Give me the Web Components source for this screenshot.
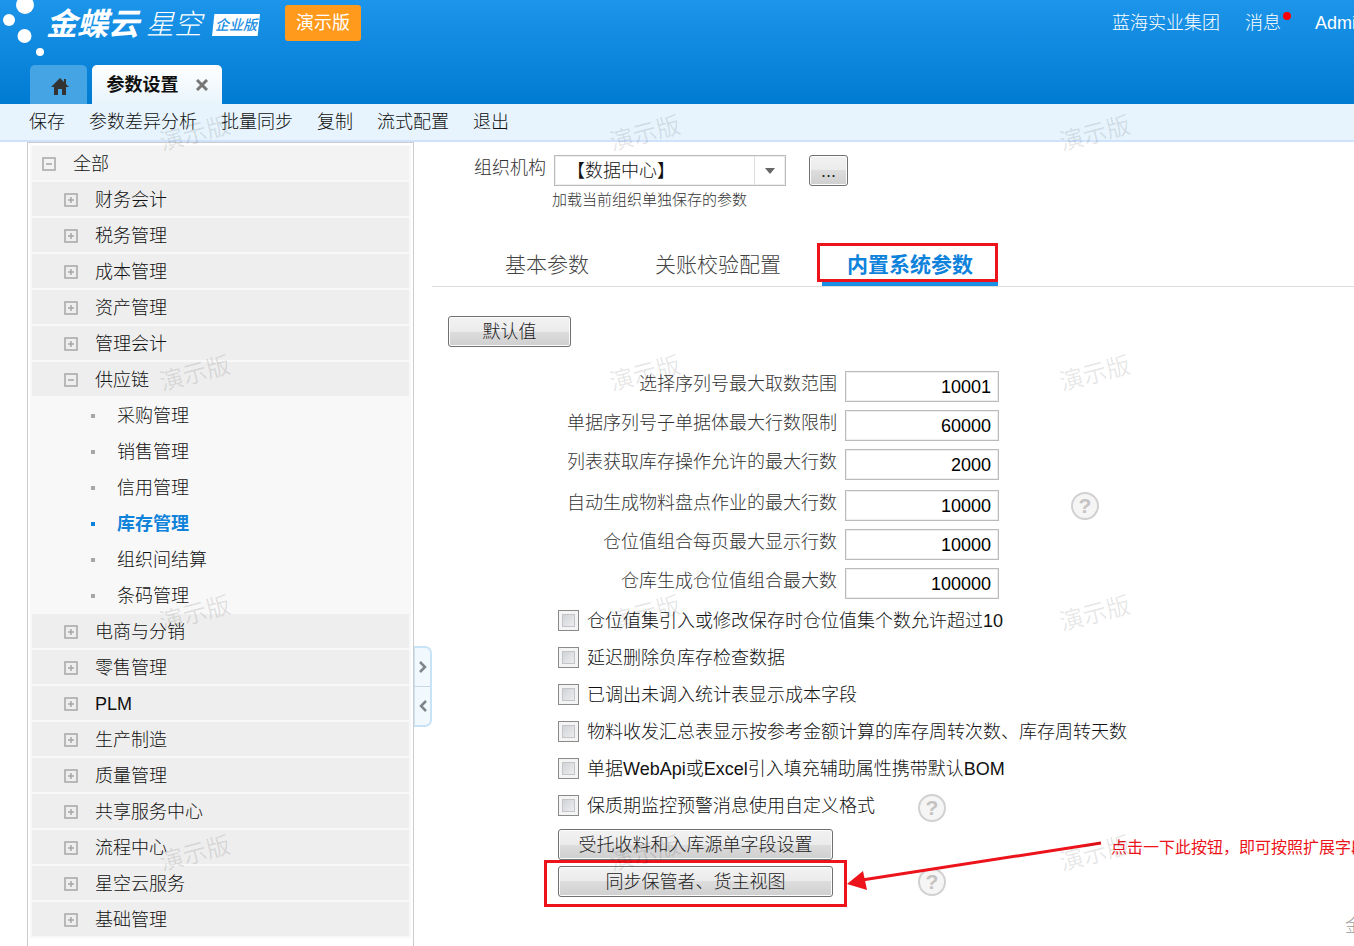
<!DOCTYPE html>
<html lang="zh-CN">
<head>
<meta charset="utf-8">
<title>参数设置</title>
<style>
    body{
        margin: 0;
        height: 100vh;
        overflow: hidden;
        background: #fff;
        color: #111;
        font: 300 18px/24px "Liberation Sans", "Noto Sans CJK SC", sans-serif;
    }
</style>
</head>
<body>
<param-app></param-app>

<script>
const define = (name, html, setup) => {
    const template = document.createElement('template');
    template.innerHTML = html;

    window.customElements.define(name, class extends HTMLElement{
        constructor() {
            super();
            this.attachShadow({ mode: 'open' });
            this.shadowRoot.appendChild(template.content.cloneNode(true));
        }

        connectedCallback() {
            if (setup) setup(this, this.shadowRoot);
        }
    });
};

// Brand, top right links and the page tabs

define('app-header', `
    <style>
        :host{
            display: flex;
            flex-direction: column;
            justify-content: space-between;
            height: 104px;
            flex: none;
            color: #fff;
            background: linear-gradient(#1c95ea, #007bd2);
        }
        .top{
            display: flex;
            align-items: flex-start;
            white-space: nowrap;
        }
        .dots{
            flex: none;
            width: 46px;
            height: 58px;
            fill: #fff;
        }
        .brand{
            display: flex;
            align-items: center;
            height: 50px;
            font-style: italic;
        }
        .name{
            font-size: 31px;
            font-weight: bold;
        }
        .sub{
            margin-left: 7px;
            font-size: 28px;
        }
        .edition{
            margin-left: 10px;
            padding: 0 3px;
            font-size: 14px;
            line-height: 22px;
            font-weight: 500;
            color: #1b8fe2;
            background: #fff;
            clip-path: polygon(5% 0, 100% 0, 95% 100%, 0 100%);
        }
        .demo{
            margin: 5px 0 0 25px;
            padding: 0 11px;
            line-height: 36px;
            border-radius: 3px;
            background: #ff9a1c;
            font-weight: 400;
        }
        nav{
            display: flex;
            gap: 25px;
            flex: 0 0 242px;
            min-width: 0;
            margin: 11px 0 0 auto;
        }
        a{
            color: inherit;
            text-decoration: none;
        }
        .msg{
            position: relative;
        }
        .msg::after{
            content: "";
            position: absolute;
            top: 1px;
            right: -10px;
            width: 8px;
            height: 8px;
            border-radius: 50%;
            background: #f00;
        }
        .msg + a{
            margin-left: 9px;
        }
        .tabs{
            display: flex;
            gap: 5px;
            padding-left: 30px;
        }
        .tab{
            display: flex;
            align-items: center;
            justify-content: center;
            height: 39px;
            border-radius: 5px 5px 0 0;
            font-weight: bold;
        }
        button{
            padding: 0;
            border: 0;
            background: none;
            font: inherit;
            color: inherit;
        }
        button.home{
            width: 57px;
            background: #45a4e4;
        }
        .home svg{
            margin: 3px 0 0 2px;
        }
        .open{
            gap: 17px;
            width: 130px;
            color: #111;
            background: linear-gradient(#fff, #e8f4fc);
        }
        .open svg{
            display: block;
        }
    </style>
    <div class="top">
        <svg class="dots" viewBox="0 0 46 58">
            <circle cx="25" cy="5" r="9"/><circle cx="9" cy="20" r="6"/>
            <circle cx="24.500" cy="36" r="7"/><circle cx="40" cy="52" r="4"/>
        </svg>
        <div class="brand">
            <span class="name">金蝶云</span><span class="sub">星空</span><span class="edition">企业版</span>
        </div>
        <span class="demo">演示版</span>
        <nav>
            <a href="#org">蓝海实业集团</a>
            <a class="msg" href="#message">消息</a>
            <a href="#user">Admin</a>
        </nav>
    </div>
    <div class="tabs">
        <button class="tab home" aria-label="首页">
            <svg width="18" height="17" viewBox="0 0 18 17"><path fill="#333" d="M9 0 0 9h3v8h4v-6h4v6h4V9h3l-3-3V1h-2v3z"/></svg>
        </button>
        <div class="tab open">
            <span>参数设置</span>
            <button aria-label="关闭"><svg width="12" height="12" viewBox="0 0 12 12"><path d="M1 1l10 10M11 1L1 11" stroke="#777" stroke-width="3"/></svg></button>
        </div>
    </div>
`);

define('tool-bar', `
    <style>
        :host{
            display: flex;
            flex: none;
            gap: 24px;
            height: 36px;
            padding-left: 29px;
            border-bottom: 2px solid #cfe2fd;
            background: #e7f4fd;
        }
        ::slotted(button){
            padding: 0;
            border: 0;
            background: none;
            font: inherit;
            color: inherit;
        }
    </style>
    <slot></slot>
`);

// One row of the module tree. kind: plus, minus or leaf

define('tree-item', `
    <style>
        :host{
            display: block;
            --indent: 32px;
            background: #eee;
        }
        :host([kind=leaf]){
            --indent: 54px;
            background: none;
        }
        :host([root]){
            --indent: 10px;
            background: #f3f3f3;
        }
        :host([current]){
            font-weight: bold;
            color: #0f83db;
        }
        a{
            display: flex;
            align-items: center;
            gap: 17px;
            box-sizing: border-box;
            height: 34px;
            padding: 1px 0 0 var(--indent);
            color: inherit;
            text-decoration: none;
        }
        svg{
            width: 14px;
            height: 14px;
            fill: none;
            stroke: #a6a6a6;
            stroke-width: 1.500;
        }
        .dot{
            fill: #a6a6a6;
            stroke: none;
        }
        :host([current]) .dot{
            fill: #0f83db;
        }
        :host([kind=leaf]) .box, :host(:not([kind=leaf])) .dot, :host(:not([kind=plus])) .bar{
            display: none;
        }
    </style>
    <a href="#module">
        <svg viewBox="0 0 14 14">
            <path class="box" d="M1 1h12v12H1zM4 7h6"/>
            <path class="bar" d="M7 4v6"/>
            <rect class="dot" x="5" y="5" width="4" height="4"/>
        </svg>
        <span><slot></slot></span>
    </a>
`);

define('module-tree', `
    <style>
        :host{
            display: block;
            flex: none;
            box-sizing: border-box;
            width: 387px;
            margin-left: 27px;
            padding: 2px;
            border: 1px solid #ccc;
            border-bottom: 0;
        }
        div{
            display: flex;
            flex-direction: column;
            gap: 2px;
            padding: 1px 2px 2px;
            background: #f8f8f8;
        }
    </style>
    <div><slot></slot></div>
`);

define('split-handle', `
    <style>
        :host{
            display: flex;
            flex-direction: column;
            flex: none;
            box-sizing: border-box;
            width: 18px;
            height: 81px;
            margin-top: 504px;
            border: 2px solid #c9e3f6;
            border-left-width: 1px;
            border-radius: 0 7px 7px 0;
            background: #f2f9fe;
        }
        button{
            flex: 1;
            padding: 0;
            border: 0;
            background: none;
        }
        button + button{
            border-top: 1px solid #c8d8e2;
        }
        svg{
            display: block;
            margin: auto;
            fill: none;
            stroke: #7d8589;
            stroke-width: 2.500;
        }
    </style>
    <button aria-label="展开"><svg width="8" height="12"><path d="M1 1l5 5-5 5"/></svg></button>
    <button aria-label="收起"><svg width="8" height="12"><path d="M7 1L2 6l5 5"/></svg></button>
`);

define('push-button', `
    <style>
        :host{
            display: block;
            flex: none;
            width: 123px;
        }
        :host([wide]){
            width: 275px;
        }
        :host([small]){
            width: 39px;
        }
        button{
            display: block;
            width: 100%;
            height: 31px;
            padding: 0;
            border: 1px solid #707070;
            border-radius: 3px;
            box-shadow: inset 0 0 0 1px #fcfcfc;
            background: linear-gradient(#f2f2f2, #ebebeb 50%, #ddd 50%, #cfcfcf);
            font: inherit;
            color: #222;
        }
    </style>
    <button><slot></slot></button>
`);

define('help-tip', `
    <style>
        :host{
            display: block;
            flex: none;
        }
        button{
            display: block;
            width: 28px;
            height: 28px;
            padding: 0;
            border: 2px solid #d2d0d0;
            border-radius: 50%;
            background: #f5f5f5;
            font: bold 21px/24px "Liberation Sans", sans-serif;
            color: #c5c2c2;
        }
    </style>
    <button aria-label="帮助">?</button>
`);

define('number-field', `
    <style>
        :host{
            display: flex;
            align-items: flex-start;
            gap: 8px;
            height: 31px;
        }
        label{
            width: 389px;
            line-height: 26px;
            text-align: right;
            color: #333;
        }
        input{
            box-sizing: border-box;
            width: 154px;
            height: 31px;
            padding: 1px 7px 0;
            border: 1px solid #bbb;
            box-shadow: inset 0 0 0 1px #eee;
            font: inherit;
            color: #000;
            text-align: right;
        }
        ::slotted(help-tip){
            margin: 2px 0 0 64px;
        }
    </style>
    <label for="num"></label>
    <input id="num" type="text" inputmode="numeric">
    <slot></slot>
`, (host, root) => {
    root.querySelector('label').textContent = host.getAttribute('label');
    root.querySelector('input').value = host.getAttribute('value');
});

define('check-field', `
    <style>
        :host{
            display: flex;
            align-items: center;
            height: 37px;
            white-space: nowrap;
        }
        label{
            display: flex;
            align-items: center;
            gap: 8px;
        }
        input{
            appearance: none;
            width: 21px;
            height: 21px;
            margin: 0;
            border: 1px solid #8a8a8a;
            outline: 1px solid #c3c5c8;
            outline-offset: -5px;
            box-shadow: inset 0 0 0 3px #f4f4f4;
            background: linear-gradient(135deg, #c6cacf, #f6f6f6);
        }
        ::slotted(help-tip){
            margin: 4px 0 0 43px;
        }
    </style>
    <label><input type="checkbox"><span></span></label>
    <slot></slot>
`, (host, root) => {
    root.querySelector('span').textContent = host.getAttribute('label');
});

define('org-picker', `
    <style>
        :host{
            display: block;
            padding-left: 42px;
        }
        .row{
            display: flex;
            gap: 8px;
        }
        label{
            line-height: 26px;
            color: #333;
        }
        .combo{
            position: relative;
            width: 232px;
            margin-right: 15px;
        }
        select{
            appearance: none;
            box-sizing: border-box;
            width: 100%;
            height: 31px;
            padding: 0 40px 0 12px;
            border: 1px solid #bbb;
            box-shadow: inset 0 0 0 1px #eee;
            border-radius: 0;
            background: #fff;
            font: inherit;
            color: #111;
        }
        .arrow{
            position: absolute;
            top: 1px;
            right: 1px;
            bottom: 1px;
            display: grid;
            place-items: center;
            width: 30px;
            border-left: 1px solid #ddd;
            pointer-events: none;
        }
        p{
            margin: 3px 0 0 78px;
            font-size: 15px;
            line-height: 22px;
            color: #333;
        }
    </style>
    <div class="row">
        <label for="org">组织机构</label>
        <div class="combo">
            <select id="org"><option>【数据中心】</option></select>
            <span class="arrow"><svg width="10" height="6"><path d="M0 0h10L5 6z" fill="#666"/></svg></span>
        </div>
        <push-button small>...</push-button>
    </div>
    <p>加载当前组织单独保存的参数</p>
`);

define('tab-strip', `
    <style>
        :host{
            display: flex;
            gap: 16px;
            margin-top: 32px;
            padding-left: 48px;
            border-bottom: 1px solid #ddd;
            font-size: 21px;
        }
        button{
            position: relative;
            height: 43px;
            padding: 0 25px;
            border: 0;
            background: none;
            font: inherit;
            color: #444;
            white-space: nowrap;
        }
        .on{
            font-weight: bold;
            color: #0f83db;
            box-shadow: inset 0 -5px #1a8fe3;
        }
        /* red frame drawn over the open tab */
        .on::after{
            content: "";
            position: absolute;
            inset: 0 0 4px -5px;
            border: 3px solid #ec131b;
        }
    </style>
    <button>基本参数</button>
    <button>关账校验配置</button>
    <button class="on">内置系统参数</button>
`);

define('param-form', `
    <style>
        :host{
            display: block;
            padding: 29px 0 0 16px;
        }
        .numbers{
            display: flex;
            flex-direction: column;
            gap: 8px;
        }
        .numbers:first-of-type{
            margin: 24px 0 10px;
        }
        .checks{
            padding: 3px 0 5px 110px;
        }
        .actions{
            display: flex;
            flex-direction: column;
            gap: 6px;
            padding-left: 110px;
        }
        .sync{
            position: relative;
            display: flex;
            align-items: center;
            gap: 85px;
        }
        /* frame, arrow and note pointing at the sync button */
        .mark{
            position: absolute;
            left: -14px;
            top: -43px;
            overflow: visible;
            pointer-events: none;
        }
        .note{
            position: absolute;
            left: 553px;
            top: -30px;
            font-size: 16px;
            font-weight: 400;
            color: #ec131b;
            white-space: nowrap;
        }
    </style>
    <push-button>默认值</push-button>
    <div class="numbers">
        <number-field label="选择序列号最大取数范围" value="10001"></number-field>
        <number-field label="单据序列号子单据体最大行数限制" value="60000"></number-field>
        <number-field label="列表获取库存操作允许的最大行数" value="2000"></number-field>
    </div>
    <div class="numbers">
        <number-field label="自动生成物料盘点作业的最大行数" value="10000"><help-tip></help-tip></number-field>
        <number-field label="仓位值组合每页最大显示行数" value="10000"></number-field>
        <number-field label="仓库生成仓位值组合最大数" value="100000"></number-field>
    </div>
    <div class="checks">
        <check-field label="仓位值集引入或修改保存时仓位值集个数允许超过10"></check-field>
        <check-field label="延迟删除负库存检查数据"></check-field>
        <check-field label="已调出未调入统计表显示成本字段"></check-field>
        <check-field label="物料收发汇总表显示按参考金额计算的库存周转次数、库存周转天数"></check-field>
        <check-field label="单据WebApi或Excel引入填充辅助属性携带默认BOM"></check-field>
        <check-field label="保质期监控预警消息使用自定义格式"><help-tip></help-tip></check-field>
    </div>
    <div class="actions">
        <push-button wide>受托收料和入库源单字段设置</push-button>
        <div class="sync">
            <push-button wide>同步保管者、货主视图</push-button>
            <help-tip></help-tip>
            <svg class="mark" width="560" height="84">
                <rect x="1.500" y="38.500" width="300" height="44" fill="none" stroke="#ec131b" stroke-width="3"/>
                <path d="M557 20L318 57" stroke="#ec131b" stroke-width="3"/>
                <path d="M303 61l16-13 4 19z" fill="#ec131b"/>
            </svg>
            <span class="note">点击一下此按钮，即可按照扩展字段</span>
        </div>
    </div>
`);

// Slanted trial marks over the whole page

define('water-mark', `
    <style>
        :host{
            position: absolute;
            inset: 14px 0 0 -30px;
            display: grid;
            grid-template-columns: repeat(auto-fill, 450px);
            grid-auto-rows: 240px;
            place-items: center;
            overflow: hidden;
            pointer-events: none;
            font-size: 24px;
            font-weight: 400;
            color: rgba(0, 0, 0, .1);
        }
        span{
            transform: rotate(-15deg);
        }
    </style>
`, (host, root) => {
    for (let i = 0; i < 12; i++) {
        const mark = document.createElement('span');
        mark.textContent = '演示版';
        root.appendChild(mark);
    }
});

define('param-app', `
    <style>
        :host{
            position: relative;
            display: flex;
            flex-direction: column;
            height: 100%;
            overflow: hidden;
        }
        .body{
            display: flex;
            flex: 1;
            min-height: 0;
        }
        split-handle{
            align-self: flex-start;
        }
        main{
            flex: 1;
            min-width: 0;
            padding-top: 13px;
        }
        .foot{
            position: absolute;
            left: calc(100% - 9px);
            bottom: 8px;
            white-space: nowrap;
            color: #999;
        }
    </style>
    <app-header></app-header>
    <tool-bar>
        <button>保存</button>
        <button>参数差异分析</button>
        <button>批量同步</button>
        <button>复制</button>
        <button>流式配置</button>
        <button>退出</button>
    </tool-bar>
    <div class="body">
        <module-tree>
            <tree-item root kind="minus">全部</tree-item>
            <tree-item kind="plus">财务会计</tree-item>
            <tree-item kind="plus">税务管理</tree-item>
            <tree-item kind="plus">成本管理</tree-item>
            <tree-item kind="plus">资产管理</tree-item>
            <tree-item kind="plus">管理会计</tree-item>
            <tree-item kind="minus">供应链</tree-item>
            <tree-item kind="leaf">采购管理</tree-item>
            <tree-item kind="leaf">销售管理</tree-item>
            <tree-item kind="leaf">信用管理</tree-item>
            <tree-item kind="leaf" current>库存管理</tree-item>
            <tree-item kind="leaf">组织间结算</tree-item>
            <tree-item kind="leaf">条码管理</tree-item>
            <tree-item kind="plus">电商与分销</tree-item>
            <tree-item kind="plus">零售管理</tree-item>
            <tree-item kind="plus">PLM</tree-item>
            <tree-item kind="plus">生产制造</tree-item>
            <tree-item kind="plus">质量管理</tree-item>
            <tree-item kind="plus">共享服务中心</tree-item>
            <tree-item kind="plus">流程中心</tree-item>
            <tree-item kind="plus">星空云服务</tree-item>
            <tree-item kind="plus">基础管理</tree-item>
        </module-tree>
        <split-handle></split-handle>
        <main>
            <org-picker></org-picker>
            <tab-strip></tab-strip>
            <param-form></param-form>
        </main>
    </div>
    <span class="foot">金</span>
    <water-mark></water-mark>
`);
</script>
</body>
</html>
